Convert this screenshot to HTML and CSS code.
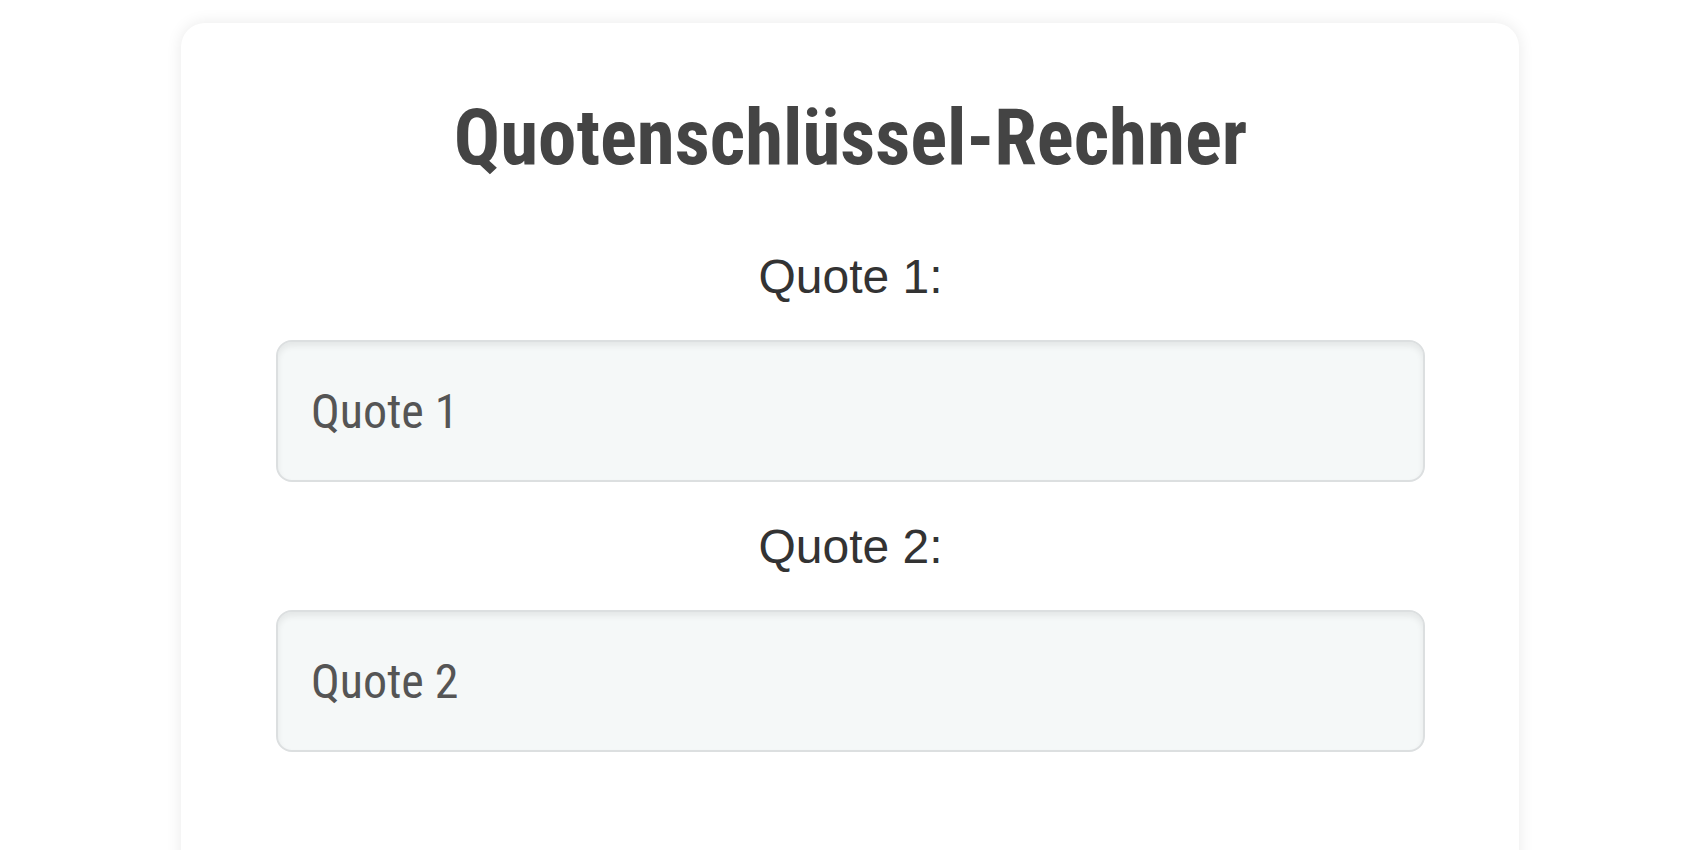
FILE: index.html
```html
<!DOCTYPE html>
<html lang="de">
<head>
<meta charset="utf-8">
<title>Quotenschlüssel-Rechner</title>
<link rel="stylesheet" href="styles.css">
</head>
<body>
<main class="card">
  <h1 class="title">Quotenschlüssel-Rechner</h1>
  <form class="form">
    <label class="label" for="q1">Quote 1:</label>
    <input class="field" id="q1" type="text" placeholder="Quote 1">
    <label class="label" for="q2">Quote 2:</label>
    <input class="field" id="q2" type="text" placeholder="Quote 2">
  </form>
</main>
</body>
</html>
```

FILE: styles.css
```css
html, body {
  margin: 0;
  padding: 0;
  background: #ffffff;
}

body {
  font-family: "Liberation Sans", Arial, sans-serif;
  display: flex;
  justify-content: center;
  padding-top: 23px;
}

.card {
  width: 1338px;
  box-sizing: border-box;
  padding: 70px 94px 80px 95px;
  background: #ffffff;
  border-radius: 24px;
  box-shadow: 0 0 16px rgba(0, 0, 0, 0.09);
  min-height: 900px;
}

.title {
  margin: 0 0 66px;
  text-align: center;
  font-family: "Roboto Condensed", "Roboto", sans-serif;
  font-stretch: condensed;
  font-weight: 700;
  font-size: 77px;
  color: #444444;
}

.form {
  display: flex;
  flex-direction: column;
}

.label {
  display: block;
  text-align: center;
  font-size: 48px;
  color: #333333;
  margin-bottom: 36px;
}

.field {
  box-sizing: border-box;
  width: 100%;
  height: 142px;
  margin: 0 0 37px;
  padding: 0 33px;
  font-family: "Roboto Condensed", "Roboto", sans-serif;
  font-stretch: condensed;
  font-size: 48px;
  color: #333333;
  background: #f5f8f8;
  border: 2px solid #dcdfe0;
  border-radius: 16px;
  box-shadow: inset 0 4px 6px rgba(0, 0, 0, 0.07);
  outline: none;
}

.field::placeholder {
  color: #555555;
  opacity: 1;
}
```
